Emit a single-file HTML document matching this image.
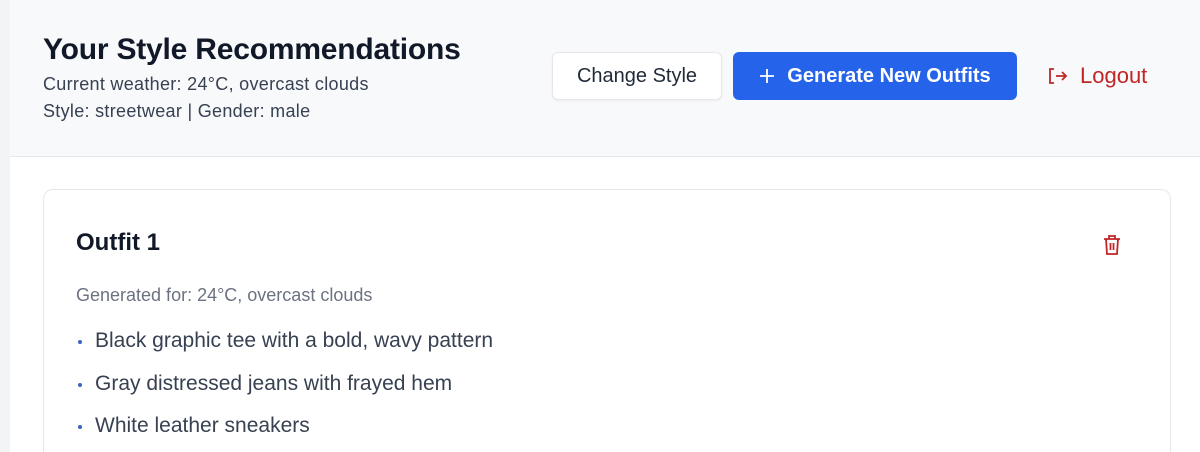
<!DOCTYPE html>
<html><head><style>
*{box-sizing:border-box;margin:0;padding:0}
html,body{width:1200px;height:452px;overflow:hidden}
body{background:#f3f4f6;font-family:"Liberation Sans",sans-serif;position:relative}
.main{position:absolute;left:10px;top:0;width:1190px;height:452px;background:#fff;overflow:hidden}
.hdr{position:absolute;left:0;top:0;width:1190px;height:157px;background:#f8f9fb;border-bottom:1px solid #e5e7eb}
h1{position:absolute;left:33px;top:33px;font-size:30px;font-weight:bold;color:#111827;letter-spacing:-0.2px;white-space:nowrap}
.sub{position:absolute;left:33px;font-size:18px;color:#374151;white-space:nowrap;letter-spacing:0.3px}
.btn1{position:absolute;left:542px;top:52px;width:170px;height:48px;border:1px solid #e5e7eb;border-radius:6px;background:#fff;font-size:20px;color:#1f2937;display:flex;align-items:center;justify-content:center;box-shadow:0 1px 2px rgba(0,0,0,.05)}
.btn2{position:absolute;left:723px;top:52px;width:284px;height:48px;border-radius:6px;background:#2563eb;font-size:20px;color:#fff;display:flex;align-items:center;justify-content:center;gap:12px;font-weight:bold}
.lo{position:absolute;left:1038px;top:63px;font-size:22px;color:#c02626;display:flex;align-items:center;gap:10px}
.card{position:absolute;left:33px;top:189px;width:1128px;height:263px;border:1px solid #e5e7eb;border-bottom:none;border-radius:10px 10px 0 0;background:#fff}
.t{position:absolute;left:32px;top:39px;font-size:24px;color:#111827;font-weight:600}
.g{position:absolute;left:32px;top:95px;font-size:18px;color:#6b7280}
ul{position:absolute;left:32px;top:139px;list-style:none}
li{font-size:21px;color:#374151;height:42.5px;position:relative;padding-left:19px;white-space:nowrap}
li:before{content:"";position:absolute;left:2px;top:11px;width:4px;height:4px;border-radius:50%;background:#3b64c8}
</style></head><body>
<div class="main">
<div class="hdr">
<h1>Your Style Recommendations</h1>
<div class="sub" style="top:74px">Current weather: 24°C, overcast clouds</div>
<div class="sub" style="top:101px">Style: streetwear | Gender: male</div>
<div class="btn1">Change Style</div>
<div class="btn2"><svg width="16" height="16" viewBox="0 0 16 16"><path d="M8 1v14M1 8h14" stroke="#fff" stroke-width="1.8"/></svg><span>Generate New Outfits</span></div>
<div class="lo"><svg width="22" height="18" viewBox="0 0 22 18" fill="none" stroke="#c02626" stroke-width="1.8"><path d="M6 2H2v14h4M8 9h10M14 5l4 4-4 4"/></svg><span>Logout</span></div>
</div>
<div class="card">
<div class="t">Outfit 1</div>
<svg style="position:absolute;left:1058px;top:44px" width="20" height="22" viewBox="0 0 20 22" fill="none" stroke="#c02626" stroke-width="1.8"><path d="M2 5h16M7 5V2h6v3M4 5l1 15h10l1-15M8.5 9v7M11.5 9v7"/></svg>
<div class="g">Generated for: 24°C, overcast clouds</div>
<ul><li>Black graphic tee with a bold, wavy pattern</li><li>Gray distressed jeans with frayed hem</li><li>White leather sneakers</li></ul>
</div>
</div>
</body></html>
